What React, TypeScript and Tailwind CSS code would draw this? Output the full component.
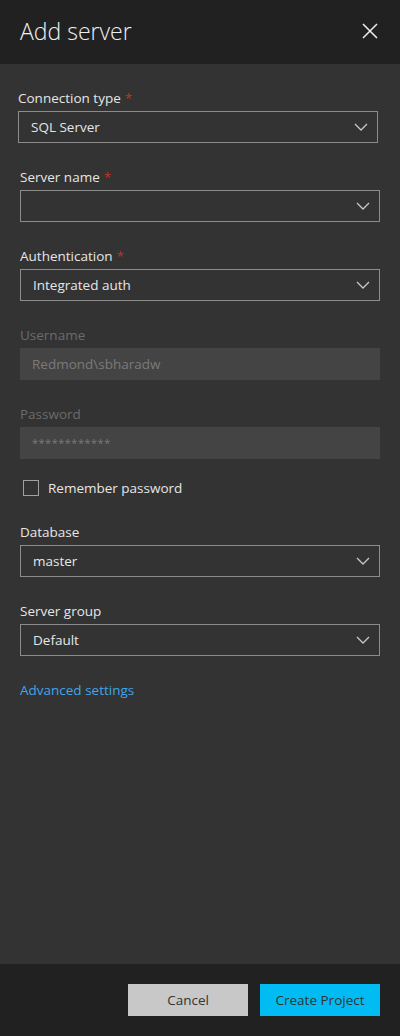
import { ReactNode } from "react";

const Chevron = () => (
  <svg width="14" height="8" viewBox="0 0 14 8" fill="none" className="shrink-0">
    <path d="M1 1l6 6 6-6" stroke="#c8c8c8" strokeWidth="1.3" />
  </svg>
);

const Label = ({ children, required, disabled }: { children: ReactNode; required?: boolean; disabled?: boolean }) => (
  <div className={`h-5 leading-5 text-[13.5px] mb-[3px] ${disabled ? "text-[#6b6b6b]" : "text-[#e6e6e6]"}`}>
    {children}
    {required && <span className="text-[#c4321a] ml-1">*</span>}
  </div>
);

const Select = ({ value }: { value?: string }) => (
  <div className="h-8 border border-[#8c8c8c] flex items-center justify-between pl-3 pr-[9px] text-[13.5px] text-[#e6e6e6]">
    <span>{value}</span>
    <Chevron />
  </div>
);

const Disabled = ({ value, small }: { value: string; small?: boolean }) => (
  <div className={`h-8 bg-[#444444] flex items-center pl-3 text-[#7a7a7a] ${small ? "text-[11px] tracking-[0.5px]" : "text-[13.5px]"}`}>
    {value}
  </div>
);

export default function App() {
  return (
    <div className="w-[400px] h-[1036px] flex flex-col bg-[#333333] font-['Open_Sans',sans-serif]">
      <div className="h-16 shrink-0 bg-[#212121] flex items-center justify-between pl-[20px] pr-[22px]">
        <h1 className="text-[23px] font-light text-[#f0f0f0] pb-[2px]">Add server</h1>
        <svg width="16" height="16" viewBox="0 0 16 16" className="mb-[2px]">
          <path d="M1 1l14 14M15 1L1 15" stroke="#f0f0f0" strokeWidth="1.5" />
        </svg>
      </div>

      <div className="flex-1 pt-6 px-5 flex flex-col">
        <div className="-ml-[2px] -mr-[2px] mb-6 w-[360px]">
          <Label required>Connection type</Label>
          <Select value="SQL Server" />
        </div>
        <div className="mb-6">
          <Label required>Server name</Label>
          <Select />
        </div>
        <div className="mb-6">
          <Label required>Authentication</Label>
          <Select value="Integrated auth" />
        </div>
        <div className="mb-6">
          <Label disabled>Username</Label>
          <Disabled value="Redmond\sbharadw" />
        </div>
        <div className="mb-[19px]">
          <Label disabled>Password</Label>
          <Disabled value="************" small />
        </div>
        <label className="flex items-center gap-[9px] pl-[3px] mb-[24px]">
          <span className="w-4 h-4 border border-[#a0a0a0]" />
          <span className="text-[13.5px] text-[#e6e6e6] leading-5">Remember password</span>
        </label>
        <div className="mb-6">
          <Label>Database</Label>
          <Select value="master" />
        </div>
        <div className="mb-6">
          <Label>Server group</Label>
          <Select value="Default" />
        </div>
        <a className="text-[13.5px] text-[#3ea6ea] leading-5">Advanced settings</a>
      </div>

      <div className="h-[72px] shrink-0 bg-[#212121] flex items-center justify-end gap-3 pr-5">
        <button className="w-[120px] h-8 bg-[#c8c8c8] text-[13.5px] text-[#333333]">Cancel</button>
        <button className="w-[120px] h-8 bg-[#00bcf2] text-[13.5px] text-[#333333]">Create Project</button>
      </div>
    </div>
  );
}
